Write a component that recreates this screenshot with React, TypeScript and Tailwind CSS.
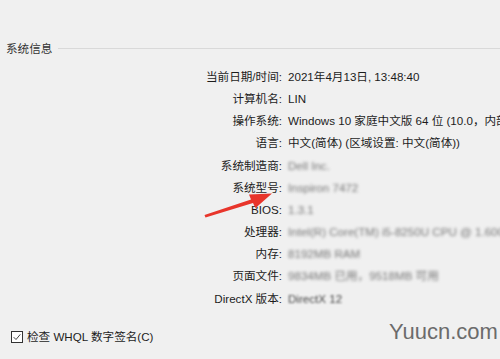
import React from "react";

const rows: { label: string; value: string; blur?: string }[] = [
  { label: "当前日期/时间:", value: "2021年4月13日, 13:48:40" },
  { label: "计算机名:", value: "LIN" },
  { label: "操作系统:", value: "Windows 10 家庭中文版 64 位 (10.0，内部版本 19042)" },
  { label: "语言:", value: "中文(简体) (区域设置: 中文(简体))" },
  { label: "系统制造商:", value: "Dell Inc.", blur: "blur-[1.6px] text-[#777]" },
  { label: "系统型号:", value: "Inspiron 7472", blur: "blur-[1.6px] text-[#777]" },
  { label: "BIOS:", value: "1.3.1", blur: "blur-[1.6px] text-[#777]" },
  { label: "处理器:", value: "Intel(R) Core(TM) i5-8250U CPU @ 1.60GHz (8 CPUs)", blur: "blur-[1.6px] text-[#777]" },
  { label: "内存:", value: "8192MB RAM", blur: "blur-[1.6px] text-[#777]" },
  { label: "页面文件:", value: "9834MB 已用，9518MB 可用", blur: "blur-[1.6px] text-[#777]" },
  { label: "DirectX 版本:", value: "DirectX 12", blur: "blur-[0.9px] text-[#444]" },
];

function InfoRow({ label, value, blur }: { label: string; value: string; blur?: string }) {
  return (
    <div className="flex h-[22.2px] items-center">
      <div className="w-[282px] shrink-0 text-right">{label}</div>
      <div className={"ml-[6px] whitespace-nowrap " + (blur ?? "")}>{value}</div>
    </div>
  );
}

export default function App() {
  return (
    <div
      className="relative h-[359px] w-[500px] overflow-hidden bg-[#f0f0f0] text-[11.6px] text-[#1c1c1c]"
      style={{ fontFamily: '"Liberation Sans", "Noto Sans CJK SC", sans-serif' }}
    >
      <div className="flex items-center pt-[40px] pl-[6px]">
        <span className="text-[11.6px] text-[#333]">系统信息</span>
        <div className="ml-[6px] h-px flex-1 bg-[#d9d9d9]" />
      </div>

      <div className="mt-[8px]">
        {rows.map((r) => (
          <InfoRow key={r.label} {...r} />
        ))}
      </div>

      <div className="mt-[19px] flex items-center pl-[11px]">
        <div className="flex h-[12px] w-[12px] items-center justify-center border border-[#333] bg-white">
          <svg viewBox="0 0 12 12" className="h-[10px] w-[10px]">
            <path d="M2 6.2 L4.8 9 L10 2.8" fill="none" stroke="#333" strokeWidth="1.1" />
          </svg>
        </div>
        <span className="ml-[4px]">检查 WHQL 数字签名(C)</span>
      </div>

      {/* red annotation arrow */}
      <svg className="absolute left-0 top-0" width="500" height="359" viewBox="0 0 500 359">
        <path d="M204.5 215 L251 199.5 L249 194.5 L272 193.5 L255.5 208 L253 203 L205.5 217.5 Z" fill="#e8352b" />
      </svg>

      <div
        className="absolute left-[389px] top-[315px] text-[22px] text-[#6b6b6b]"
        style={{ fontFamily: '"Liberation Sans", sans-serif' }}
      >
        Yuucn.com
      </div>
    </div>
  );
}
